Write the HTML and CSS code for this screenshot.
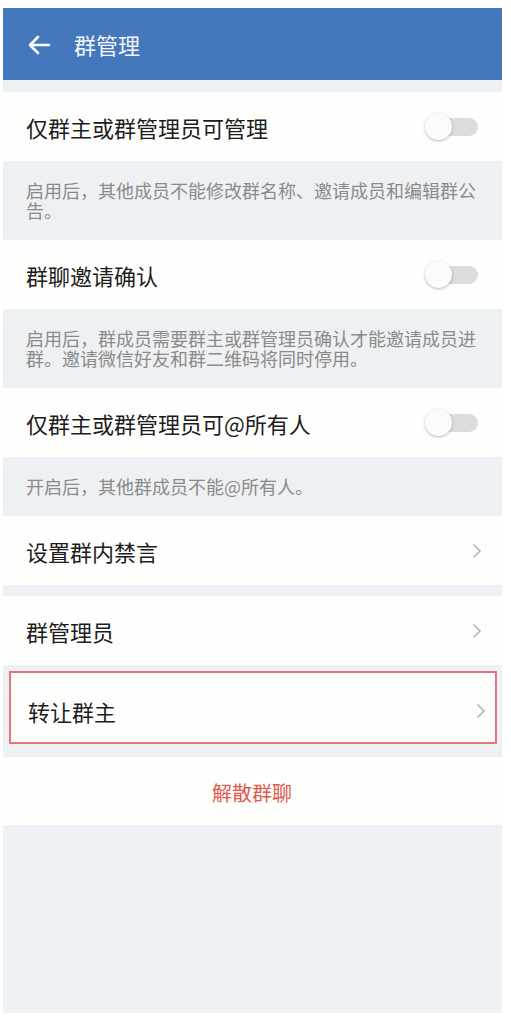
FILE: index.html
```html
<!DOCTYPE html>
<html lang="zh-CN">
<head>
<meta charset="utf-8">
<title>群管理</title>
<link rel="stylesheet" href="styles.css">
</head>
<body>
<div class="page">
  <header class="header">
    <svg class="back" width="24" height="20" viewBox="0 0 24 20">
      <path d="M22 10H3M11 2L3 10l8 8" fill="none" stroke="#fff" stroke-width="2.6" stroke-linecap="round" stroke-linejoin="round"/>
    </svg>
    <span class="title">群管理</span>
  </header>
  <div class="gap gap-top"></div>

  <div class="row"><span class="label">仅群主或群管理员可管理</span><span class="toggle"><span class="knob"></span></span></div>
  <div class="desc">启用后，其他成员不能修改群名称、邀请成员和编辑群公告。</div>

  <div class="row"><span class="label">群聊邀请确认</span><span class="toggle"><span class="knob"></span></span></div>
  <div class="desc">启用后，群成员需要群主或群管理员确认才能邀请成员进群。邀请微信好友和群二维码将同时停用。</div>

  <div class="row"><span class="label">仅群主或群管理员可@所有人</span><span class="toggle"><span class="knob"></span></span></div>
  <div class="desc">开启后，其他群成员不能@所有人。</div>

  <div class="row"><span class="label">设置群内禁言</span><svg class="chev" width="10" height="16" viewBox="0 0 10 16"><path d="M1.5 1.5L8 8l-6.5 6.5" fill="none" stroke="#b3b3b3" stroke-width="1.6"/></svg></div>
  <div class="gap gap-11"></div>

  <div class="row"><span class="label">群管理员</span><svg class="chev" width="10" height="16" viewBox="0 0 10 16"><path d="M1.5 1.5L8 8l-6.5 6.5" fill="none" stroke="#b3b3b3" stroke-width="1.6"/></svg></div>
  <div class="gap gap-6"></div>

  <div class="row row-marked"><span class="label">转让群主</span><svg class="chev" width="10" height="16" viewBox="0 0 10 16"><path d="M1.5 1.5L8 8l-6.5 6.5" fill="none" stroke="#b3b3b3" stroke-width="1.6"/></svg></div>
  <div class="gap gap-13"></div>

  <div class="row row-danger"><span class="danger">解散群聊</span></div>
  <div class="filler"></div>
</div>
</body>
</html>
```
FILE: styles.css
```css
html, body {
  margin: 0;
  padding: 0;
  background: #ffffff;
}
body {
  font-family: "Noto Sans CJK SC", "Noto Sans", sans-serif;
}
.page {
  margin: 8px 9px 0 3px;
  width: 499px;
  background: #eef1f4;
}
.header {
  height: 72px;
  background: #4577bd;
  display: flex;
  align-items: center;
  padding-left: 24px;
}
.back {
  display: block;
  margin-top: 1px;
}
.title {
  color: #f4f7fc;
  font-size: 22px;
  margin-left: 23px;
  line-height: 1;
}
.gap { background: #eef1f4; }
.gap-top { height: 12px; }
.gap-13 { height: 13px; }
.gap-11 { height: 11px; }
.gap-6 { height: 6px; }
.row {
  height: 69px;
  background: #fefefc;
  display: flex;
  align-items: center;
  justify-content: space-between;
  padding: 0 24px 0 23px;
  box-sizing: border-box;
}
.label {
  font-size: 22px;
  color: #1c1c1c;
  line-height: 1;
}
.desc {
  background: #eef1f4;
  color: #8a8a8a;
  font-size: 18px;
  line-height: 20px;
  padding: 19px 20px 20px 23px;
}
.toggle {
  position: relative;
  width: 53px;
  height: 27px;
  display: block;
}
.toggle::before {
  content: "";
  position: absolute;
  left: 14px;
  right: 0;
  top: 5px;
  height: 18px;
  border-radius: 9px;
  background: #dcdcdc;
}
.knob {
  position: absolute;
  left: 0;
  top: 0;
  width: 27px;
  height: 27px;
  border-radius: 50%;
  background: #fbfbfb;
  box-shadow: 0 1px 3px rgba(0, 0, 0, 0.28);
}
.chev {
  display: block;
  margin-right: -4px;
}
.row-marked {
  height: 73px;
  margin: 0 5px 0 6px;
  border: 2px solid #e2767a;
  padding-top: 7px;
  padding-left: 17px;
  padding-right: 13px;
}
.row-danger {
  height: 68px;
  justify-content: center;
  padding-top: 3px;
}
.danger {
  color: #e0594f;
  font-size: 20px;
  line-height: 1;
}
.filler {
  height: 188px;
  background: #eff2f5;
}
```
